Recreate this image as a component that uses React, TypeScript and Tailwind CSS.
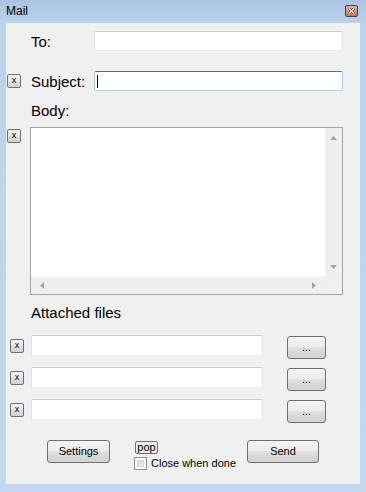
import React from 'react'

const btnBg =
  'bg-[linear-gradient(to_bottom,#f3f3f3_0%,#ebebeb_48%,#dddddd_52%,#d2d2d2_100%)]'

// small "x" clear button shown to the left of fields
const ClearButton = ({ className = '' }: { className?: string }) => (
  <div
    className={`w-[14px] h-[14px] rounded-[2px] border border-[#707070] ${btnBg} flex items-center justify-center text-[9px] leading-none text-black ${className}`}
  >
    <span className="-mt-[1px]">x</span>
  </div>
)

const TextBox = ({ className = '', focused = false }: { className?: string; focused?: boolean }) => (
  <div
    className={`bg-white rounded-[2px] border ${
      focused
        ? 'border-t-[#3d7bad] border-x-[#a4c9e3] border-b-[#b7d5ea]'
        : 'border-t-[#c8cbd1] border-x-[#e0e3e8] border-b-[#e8ebef]'
    } flex items-center ${className}`}
  >
    {focused && <div className="ml-[2px] w-[1px] h-[13px] bg-black" />}
  </div>
)

const PushButton = ({ label, className = '' }: { label: string; className?: string }) => (
  <div
    className={`h-[23px] rounded-[3px] border border-[#707070] ${btnBg} flex items-center justify-center text-[11px] text-black ${className}`}
  >
    {label}
  </div>
)

const Arrow = ({ dir }: { dir: 'up' | 'down' | 'left' | 'right' }) => {
  const pts = {
    up: '0,4 3.5,0 7,4',
    down: '0,0 3.5,4 7,0',
    left: '4,0 0,3.5 4,7',
    right: '0,0 4,3.5 0,7',
  }[dir]
  const vertical = dir === 'up' || dir === 'down'
  return (
    <svg width={vertical ? 7 : 4} height={vertical ? 4 : 7} viewBox={vertical ? '0 0 7 4' : '0 0 4 7'}>
      <polygon points={pts} fill="#a3a3a3" />
    </svg>
  )
}

const AttachRow = () => (
  <div className="flex items-start h-[24px]">
    <div className="w-[25px] pl-[4px] pt-[4px]">
      <ClearButton className="w-[13px] h-[13px]" />
    </div>
    <TextBox className="w-[232px] h-[21px]" />
    <PushButton label="..." className="ml-[24px] mt-[1px] w-[39px]" />
  </div>
)

export default function App() {
  return (
    <div
      className="w-[366px] h-[492px] flex flex-col px-[6px] pb-[8px] bg-[linear-gradient(to_bottom,#a9c3e2_0px,#bcd3ec_24px,#c2d8ef_100%)]"
      style={{ fontFamily: '"Liberation Sans", Arial, sans-serif' }}
    >
      {/* title bar */}
      <div className="h-[23px] flex items-center justify-between">
        <span className="text-[12px] text-black -mt-[2px]">Mail</span>
        <div className="mr-[2px] -mt-[1px] w-[13px] h-[12px] rounded-[2px] border border-[#6b3329] bg-[linear-gradient(to_bottom,#e3b3a9,#c87565)] flex items-center justify-center">
          <svg width="7" height="6" viewBox="0 0 7 6">
            <path d="M1 0.5 L6 5.5 M6 0.5 L1 5.5" stroke="#3a1a14" strokeWidth="2.4" />
            <path d="M1 0.5 L6 5.5 M6 0.5 L1 5.5" stroke="#ffffff" strokeWidth="1.3" />
          </svg>
        </div>
      </div>

      {/* client area */}
      <div className="flex-1 bg-[#f0f0f0] flex flex-col pt-[8px] text-black">
        <div className="flex items-center h-[20px]">
          <div className="w-[25px]" />
          <span className="w-[63px] text-[15px] leading-[17px]">To:</span>
          <TextBox className="w-[249px] h-[20px]" />
        </div>

        <div className="flex items-center h-[20px] mt-[20px]">
          <div className="w-[25px] pl-[1px]">
            <ClearButton />
          </div>
          <span className="w-[63px] text-[15px] leading-[17px]">Subject:</span>
          <TextBox focused className="w-[249px] h-[20px]" />
        </div>

        <div className="mt-[11px] pl-[25px] text-[15px] leading-[17px]">Body:</div>

        <div className="flex items-start mt-[8px]">
          <div className="w-[24px] pl-[1px] pt-[2px]">
            <ClearButton />
          </div>
          <div className="w-[313px] h-[168px] border border-[#a5a5a5] bg-white flex flex-col">
            <div className="flex-1 flex">
              <div className="flex-1" />
              <div className="w-[17px] bg-[#efefef] flex flex-col items-center justify-between py-[8px]">
                <Arrow dir="up" />
                <Arrow dir="down" />
              </div>
            </div>
            <div className="h-[17px] flex">
              <div className="flex-1 bg-[#efefef] flex items-center justify-between px-[9px]">
                <Arrow dir="left" />
                <Arrow dir="right" />
              </div>
              <div className="w-[17px] bg-[#f0f0f0]" />
            </div>
          </div>
        </div>

        <div className="mt-[9px] pl-[25px] text-[15px] leading-[17px]">Attached files</div>

        <div className="mt-[14px] flex flex-col gap-[8px]">
          <AttachRow />
          <AttachRow />
          <AttachRow />
        </div>

        <div className="mt-[17px] flex items-start">
          <PushButton label="Settings" className="ml-[41px] w-[63px]" />
          <div className="ml-[24px] w-[113px] flex flex-col items-start">
            <div className="ml-[1px] mt-[1px] w-[23px] h-[13px] rounded-[2px] border border-[#707070] bg-[#ececec] flex items-center justify-center text-[11px] leading-none">
              <span className="-mt-[1px]">pop</span>
            </div>
            <div className="mt-[3px] flex items-center">
              <div className="w-[13px] h-[13px] border border-[#8e8f8f] bg-white p-[2px]">
                <div className="w-full h-full bg-[linear-gradient(135deg,#cbcfd5,#f4f4f4)] border border-[#d2d4d8]" />
              </div>
              <span className="ml-[4px] text-[11px] leading-[13px]">Close when done</span>
            </div>
          </div>
          <PushButton label="Send" className="w-[72px]" />
        </div>
      </div>
    </div>
  )
}
